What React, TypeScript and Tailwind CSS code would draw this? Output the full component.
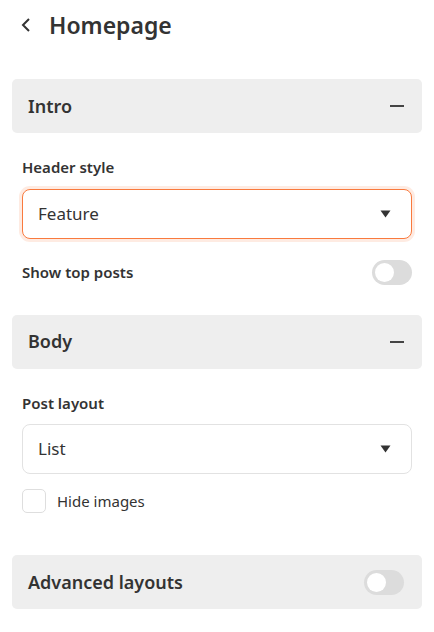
import React, { useState } from "react";

const font = { fontFamily: '"Noto Sans", "Open Sans", sans-serif' };

function Toggle({ on = false }: { on?: boolean }) {
  return (
    <div className="flex h-[25px] w-[40px] items-center rounded-full bg-[#dcdcdc] px-[3px]">
      <div className={`h-[19px] w-[19px] rounded-full bg-white ${on ? "ml-auto" : ""}`} />
    </div>
  );
}

function Caret() {
  return (
    <svg width="11" height="8" viewBox="0 0 11 8">
      <path d="M0.5 0.5h10L5.5 7.5z" fill="#333" />
    </svg>
  );
}

function Minus() {
  return <div className="h-[2px] w-[14px] bg-[#444]" />;
}

function Panel({ title, right }: { title: string; right: React.ReactNode }) {
  return (
    <div className="flex h-[54px] items-center justify-between rounded-[5px] bg-[#eeeeee] pl-[16px] pr-[18px]">
      <span className="text-[18px] font-semibold text-[#333]">{title}</span>
      {right}
    </div>
  );
}

function Select({ value, focused }: { value: string; focused?: boolean }) {
  return (
    <div
      className={`flex h-[50px] items-center justify-between rounded-[8px] border bg-white pl-[15px] pr-[20px] ${
        focused ? "border-[#f97a3e] shadow-[0_0_0_3px_rgba(249,122,62,0.15)]" : "border-[#e2e2e2]"
      }`}
    >
      <span className="text-[17px] text-[#333]">{value}</span>
      <Caret />
    </div>
  );
}

export default function App() {
  const [hide, setHide] = useState(false);
  return (
    <div className="min-h-screen w-[434px] bg-white px-[12px] text-[#333]" style={font}>
      <div className="flex h-[50px] items-center gap-[17px] pl-[8px]">
        <svg width="12" height="16" viewBox="0 0 12 16">
          <path d="M9 2L3 8l6 6" fill="none" stroke="#333" strokeWidth="2" />
        </svg>
        <h1 className="text-[23px] font-semibold leading-none">Homepage</h1>
      </div>

      <div className="mt-[29px]">
        <Panel title="Intro" right={<Minus />} />
      </div>

      <div className="px-[10px]">
        <div className="mt-[23px] text-[15px] font-semibold">Header style</div>
        <div className="mt-[10px]">
          <Select value="Feature" focused />
        </div>
        <div className="mt-[21px] flex items-center justify-between">
          <span className="text-[15px] font-semibold">Show top posts</span>
          <Toggle />
        </div>
      </div>

      <div className="mt-[30px]">
        <Panel title="Body" right={<Minus />} />
      </div>

      <div className="px-[10px]">
        <div className="mt-[23px] text-[15px] font-semibold">Post layout</div>
        <div className="mt-[10px]">
          <Select value="List" />
        </div>
        <label className="mt-[15px] flex items-center gap-[11px]">
          <input type="checkbox" className="sr-only" checked={hide} onChange={() => setHide(!hide)} />
          <span className="h-[24px] w-[24px] rounded-[5px] border border-[#dedede] bg-white" />
          <span className="text-[15px]">Hide images</span>
        </label>
      </div>

      <div className="mt-[42px]">
        <Panel title="Advanced layouts" right={<Toggle />} />
      </div>
    </div>
  );
}
